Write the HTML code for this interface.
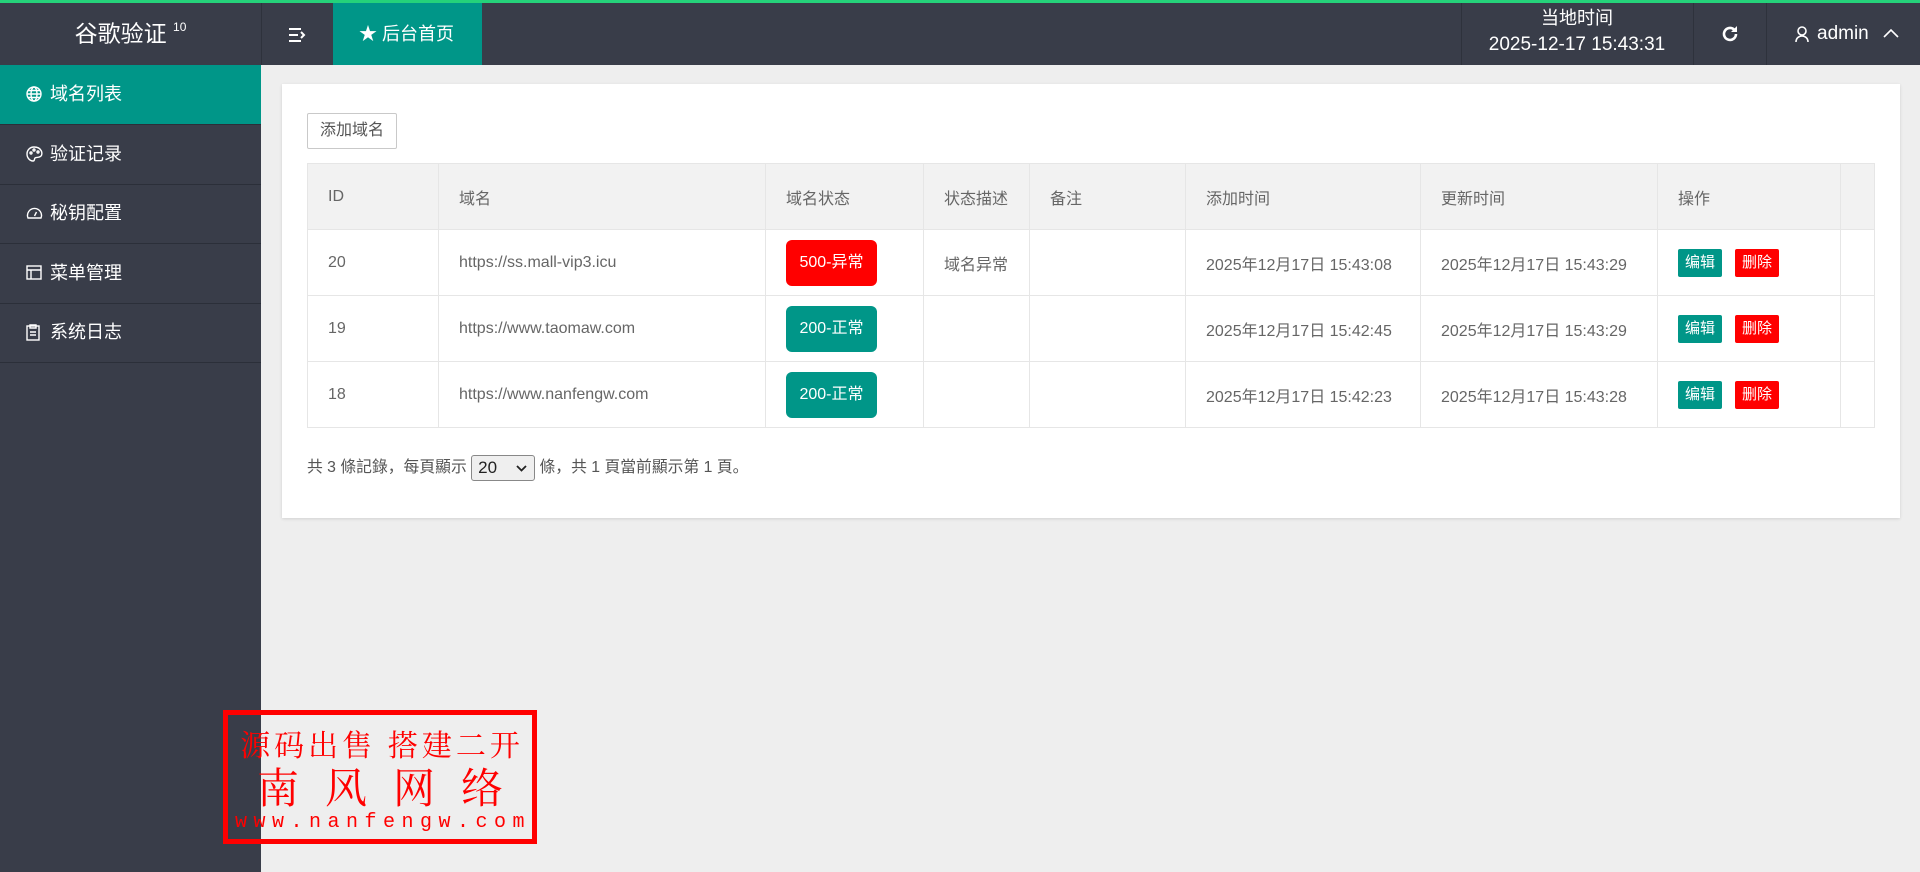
<!DOCTYPE html>
<html><head><meta charset="utf-8"><style>
*{margin:0;padding:0;box-sizing:border-box}
body{width:1920px;height:872px;overflow:hidden;background:#eeeeee;font-family:"Liberation Sans","Noto Sans CJK SC",sans-serif;position:relative}
.abs{position:absolute}
#top{left:0;top:0;width:1920px;height:3px;background:#25d27a}
#hdr{left:0;top:3px;width:1920px;height:62px;background:#393d49;color:#fff}
#side{left:0;top:65px;width:261px;height:807px;background:#393d49}
.item{position:absolute;left:0;width:261px;height:60px;border-bottom:1px solid #2b2f39;color:#fff;font-size:18px;line-height:59px;padding-left:50px}
.item svg{position:absolute;left:26px;top:21px}
.vd{position:absolute;top:0;width:1px;height:62px;background:#2e323c}
#card{left:282px;top:84px;width:1618px;height:434px;background:#fff;box-shadow:0 1px 3px rgba(0,0,0,.12)}
table{position:absolute;left:307px;top:163px;border-collapse:collapse;font-size:16px;color:#666}
td,th{border:1px solid #e6e6e6;height:66px;padding-left:20px;text-align:left;font-weight:normal;white-space:nowrap}
th{background:#f2f2f2}
.bd{display:inline-block;width:91px;height:46px;line-height:46px;text-align:center;color:#fff;border-radius:6px;font-size:16px}
.sb{display:inline-block;width:44px;height:28px;line-height:28px;text-align:center;color:#fff;border-radius:2px;font-size:15px;margin-right:13px}
.g{background:#009688}.r{background:#ff0000}
#wm{left:223px;top:710px;width:314px;height:134px;border:5px solid #f00;color:#f00;font-family:"Noto Serif CJK SC",serif;text-align:center}
</style></head><body>
<div id="top" class="abs"></div>
<div id="hdr" class="abs">
 <div class="abs" style="left:0;top:-5px;width:261px;height:62px;text-align:center;line-height:62px;font-size:23px">谷歌验证 <sup style="font-size:12px;position:relative;top:-2px">10</sup></div>
 <div class="vd" style="left:261px"></div>
 <svg class="abs" style="left:288px;top:24px" width="18" height="16" viewBox="0 0 18 16"><path d="M1 2h12M1 8h9M1 14h12M13 5l3 3-3 3" stroke="#fff" stroke-width="2" fill="none"/></svg>
 <div class="abs" style="left:333px;top:0;width:149px;height:62px;background:#009688;line-height:62px;font-size:18px;padding-left:26px">★ 后台首页</div>
 <div class="vd" style="left:1461px"></div>
 <div class="abs" style="left:1461px;top:2px;width:232px;text-align:center;font-size:18px;line-height:26px">当地时间<br><span style="font-size:19px">2025-12-17 15:43:31</span></div>
 <div class="vd" style="left:1693px"></div>
 <svg class="abs" style="left:1721px;top:22px" width="18" height="18" viewBox="0 0 18 18"><path d="M15 9a6 6 0 1 1-2-4.5" stroke="#fff" stroke-width="2.6" fill="none"/><path d="M16 1v6h-6z" fill="#fff"/></svg>
 <div class="vd" style="left:1766px"></div>
 <svg class="abs" style="left:1795px;top:23px" width="14" height="17" viewBox="0 0 14 17"><circle cx="7" cy="5" r="4" stroke="#fff" stroke-width="1.6" fill="none"/><path d="M1 16c0-4 3-6 6-6s6 2 6 6" stroke="#fff" stroke-width="1.6" fill="none"/></svg>
 <div class="abs" style="left:1817px;top:0;line-height:62px;font-size:19px">admin</div>
 <svg class="abs" style="left:1883px;top:25px" width="16" height="10" viewBox="0 0 16 10"><path d="M1 9l7-7 7 7" stroke="#fff" stroke-width="1.6" fill="none"/></svg>
</div>
<div id="side" class="abs">
 <div class="item" style="top:0;background:#009688"><svg width="16" height="16" viewBox="0 0 16 16" fill="none" stroke="#fff" stroke-width="1.4"><circle cx="8" cy="8" r="7"/><ellipse cx="8" cy="8" rx="3" ry="7"/><path d="M1 8h14M2 4.5h12M2 11.5h12"/></svg>域名列表</div>
 <div class="item" style="top:60px"><svg width="17" height="16" viewBox="0 0 17 16" fill="none" stroke="#fff" stroke-width="1.4"><path d="M8 1C4 1 1 4 1 8s3 7 6 7c2 0 1-2 2-3s4 0 6-2 1-9-7-9z"/><circle cx="5" cy="7" r="1"/><circle cx="8" cy="4" r="1"/><circle cx="12" cy="6" r="1"/></svg>验证记录</div>
 <div class="item" style="top:119px"><svg width="17" height="16" viewBox="0 0 17 16" fill="none" stroke="#fff" stroke-width="1.4"><path d="M2 13a7 7 0 1 1 13 0z"/><path d="M8.5 11l2-4"/></svg>秘钥配置</div>
 <div class="item" style="top:179px"><svg width="16" height="15" viewBox="0 0 16 15" fill="none" stroke="#fff" stroke-width="1.4"><rect x="1" y="1" width="14" height="13"/><path d="M1 5h14M5 5v9"/></svg>菜单管理</div>
 <div class="item" style="top:238px"><svg width="14" height="17" viewBox="0 0 14 17" fill="none" stroke="#fff" stroke-width="1.4"><rect x="1" y="2" width="12" height="14"/><path d="M4 1h6v3H4zM4 8h6M4 11h6"/></svg>系统日志</div>
</div>
<div id="card" class="abs"></div>
<div class="abs" style="left:307px;top:113px;width:90px;height:36px;border:1px solid #c9c9c9;border-radius:2px;font-size:16px;color:#555;line-height:34px;text-align:center;background:#fff">添加域名</div>
<table>
<tr><th style="width:131px">ID</th><th style="width:327px">域名</th><th style="width:158px">域名状态</th><th style="width:106px">状态描述</th><th style="width:156px">备注</th><th style="width:235px">添加时间</th><th style="width:237px">更新时间</th><th style="width:183px">操作</th><th style="width:34px"></th></tr>
<tr><td>20</td><td>https://ss.mall-vip3.icu</td><td><span class="bd r">500-异常</span></td><td>域名异常</td><td></td><td>2025年12月17日 15:43:08</td><td>2025年12月17日 15:43:29</td><td><span class="sb g">编辑</span><span class="sb r">删除</span></td><td></td></tr>
<tr><td>19</td><td>https://www.taomaw.com</td><td><span class="bd g">200-正常</span></td><td></td><td></td><td>2025年12月17日 15:42:45</td><td>2025年12月17日 15:43:29</td><td><span class="sb g">编辑</span><span class="sb r">删除</span></td><td></td></tr>
<tr><td>18</td><td>https://www.nanfengw.com</td><td><span class="bd g">200-正常</span></td><td></td><td></td><td>2025年12月17日 15:42:23</td><td>2025年12月17日 15:43:28</td><td><span class="sb g">编辑</span><span class="sb r">删除</span></td><td></td></tr>
</table>
<div class="abs" style="left:307px;top:455px;font-size:15.8px;color:#555;line-height:26px">共 3 條記錄，每頁顯示 <span style="display:inline-block;width:64px;height:26px;border:1px solid #888;border-radius:3px;background:#efefef;vertical-align:middle;font-size:17px;line-height:24px;padding-left:6px;color:#222;position:relative">20<svg style="position:absolute;right:7px;top:9px" width="11" height="7" viewBox="0 0 11 7"><path d="M1 1l4.5 4.5L10 1" stroke="#222" stroke-width="1.8" fill="none"/></svg></span> 條，共 1 頁當前顯示第 1 頁。</div>
<div id="wm" class="abs">
 <div style="font-size:30px;line-height:36px;margin-top:10px;white-space:nowrap;letter-spacing:4px;padding-left:4px">源码出售 搭建二开</div>
 <div style="font-size:42px;line-height:46px;letter-spacing:26px;padding-left:26px;margin-top:2px">南风网络</div>
 <div style="font-size:20px;line-height:24px;letter-spacing:6.5px;font-family:'Liberation Mono',monospace;padding-left:6px;margin-top:2px">www.nanfengw.com</div>
</div>
</body></html>
